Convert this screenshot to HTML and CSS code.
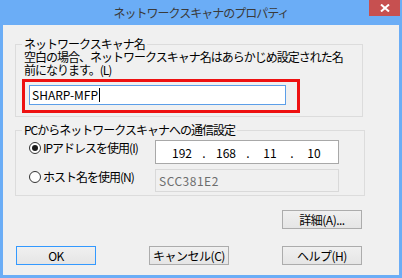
FILE: index.html
```html
<!DOCTYPE html>
<html lang="ja">
<head>
  <meta charset="UTF-8" />
  <title>ネットワークスキャナのプロパティ</title>
  <link rel="stylesheet" href="styles.css">
</head>
<body>
  <div class="window">
    <div class="titlebar">
      <span></span>
      <div class="title">ネットワークスキャナのプロパティ</div>
      <div class="close">
        <svg width="10" height="8" viewBox="0 0 10 8">
          <path d="M1 0.5 L9 7.5 M9 0.5 L1 7.5" stroke="#fff" stroke-width="2" fill="none"/>
        </svg>
      </div>
    </div>

    <div class="client">
      <fieldset class="group group-name">
        <legend>ネットワークスキャナ名</legend>
        <p class="desc">空白の場合、ネットワークスキャナ名はあらかじめ設定された名<br>前になります。(L)</p>
        <div class="highlight">
          <div class="textbox">SHARP-MFP<span class="caret"></span></div>
        </div>
      </fieldset>

      <fieldset class="group group-conn">
        <legend>PCからネットワークスキャナへの通信設定</legend>
        <div class="opt-row">
          <label class="radio"><span class="dot checked"></span>IPアドレスを使用(I)</label>
          <div class="field ipbox">
            <span class="octet">192</span><span class="sep">.</span>
            <span class="octet">168</span><span class="sep">.</span>
            <span class="octet">11</span><span class="sep">.</span>
            <span class="octet">10</span>
          </div>
        </div>
        <div class="opt-row">
          <label class="radio"><span class="dot"></span>ホスト名を使用(N)</label>
          <div class="field hostbox">SCC381E2</div>
        </div>
      </fieldset>

      <div class="buttons">
        <button class="btn btn-detail">詳細(A)...</button>
        <button class="btn btn-default">OK</button>
        <button class="btn">キャンセル(C)</button>
        <button class="btn">ヘルプ(H)</button>
      </div>
    </div>
  </div>
</body>
</html>
```

FILE: styles.css
```css
* {
  box-sizing: border-box;
}

body {
  margin: 0;
  background: #6badf6;
  font-family: "Noto Sans CJK JP", "DejaVu Sans", sans-serif;
  font-size: 12px;
  color: #000;
}

.window {
  width: 402px;
  height: 278px;
  display: flex;
  flex-direction: column;
}

/* title bar */
.titlebar {
  height: 25px;
  display: grid;
  grid-template-columns: 33px 1fr 33px;
  align-items: start;
}

.title {
  text-align: center;
  line-height: 25px;
  font-size: 12px;
  letter-spacing: -1px;
  color: #3a3a3a;
}

.close {
  width: 31px;
  height: 16px;
  background: #c75050;
  display: flex;
  justify-content: center;
  align-items: center;
}

.close svg {
  display: block;
}

/* client area */
.client {
  flex: 1;
  margin: 0 3px 3px 3px;
  background: #f0f0f0;
  padding: 13px 0 0 12px;
}

.group {
  margin: 0;
  min-width: 0;
  border: 1px solid #dcdcdc;
  padding: 0 0 3px 6px;
}

.group legend {
  padding: 0 2px;
  line-height: 12px;
  letter-spacing: -1px;
}

.group-name {
  width: 348px;
}

.group-conn {
  width: 350px;
  margin-top: 7px;
}

.desc {
  margin: 0;
  padding-left: 2px;
  line-height: 13px;
  letter-spacing: -1px;
}

.highlight {
  margin-top: 3px;
  width: 278px;
  height: 34px;
  border: 3px solid #ee1111;
  padding: 3px 0 0 4px;
}

.textbox {
  width: 257px;
  height: 20px;
  border: 1px solid #5c9ee8;
  background: #fff;
  padding-left: 2px;
  line-height: 18px;
  display: flex;
  align-items: center;
}

.caret {
  display: inline-block;
  width: 1px;
  height: 14px;
  background: #000;
  margin-left: 1px;
}

/* connection options */
.opt-row {
  display: flex;
  align-items: flex-start;
  margin-top: 5px;
}

.opt-row:first-of-type {
  margin-top: 4px;
}

.radio {
  flex: 0 0 133px;
  display: flex;
  align-items: center;
  padding-left: 7px;
  margin-top: 1px;
  line-height: 14px;
  letter-spacing: -1px;
}

.dot {
  width: 12px;
  height: 12px;
  border: 1px solid #333;
  border-radius: 50%;
  background: #fff;
  margin-right: 2px;
  display: flex;
  justify-content: center;
  align-items: center;
}

.dot.checked::after {
  content: "";
  width: 6px;
  height: 6px;
  border-radius: 50%;
  background: #1a1a1a;
}

.field {
  width: 184px;
  display: flex;
  align-items: center;
}

.ipbox {
  height: 24px;
  border: 1px solid #a8a8a8;
  background: #fff;
  padding-left: 9px;
}

.octet {
  width: 34px;
  text-align: center;
}

.sep {
  width: 10px;
  text-align: center;
}

.hostbox {
  height: 23px;
  border: 1px solid #d9d9d9;
  background: #f0f0f0;
  color: #6d6d6d;
  padding-left: 3px;
  letter-spacing: 0.5px;
}

/* buttons */
.buttons {
  display: grid;
  grid-template-columns: repeat(3, 80px);
  column-gap: 53px;
  row-gap: 17px;
  margin: 14px 0 0 1px;
}

.btn {
  height: 19px;
  padding: 0;
  font-family: inherit;
  font-size: 12px;
  line-height: 17px;
  letter-spacing: -0.5px;
  color: #000;
  border: 1px solid #acacac;
  background: linear-gradient(#f0f0f0, #e5e5e5);
  border-radius: 0;
}

.btn-detail {
  grid-column: 3;
}

.btn-default {
  border-color: #3399ff;
}
```
